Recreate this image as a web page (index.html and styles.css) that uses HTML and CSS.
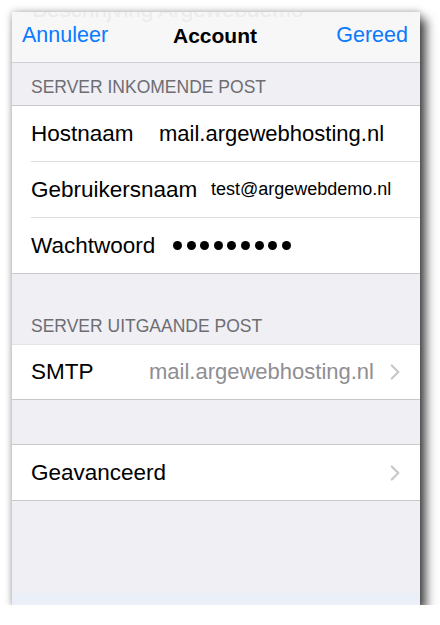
FILE: index.html
```html
<!DOCTYPE html>
<html lang="nl">
<head>
<meta charset="utf-8">
<title>Account</title>
<link rel="stylesheet" href="styles.css">
</head>
<body>
<div class="phone">
  <header class="nav">
    <span class="ghost-title">Beschrijving Argewebdemo</span>
    <span class="nav-btn nav-left">Annuleer</span>
    <span class="nav-title">Account</span>
    <span class="nav-btn nav-right">Gereed</span>
  </header>

  <div class="section-header">SERVER INKOMENDE POST</div>
  <div class="group">
    <div class="row">
      <span class="label label-host">Hostnaam</span>
      <span class="value">mail.argewebhosting.nl</span>
    </div>
    <div class="row">
      <span class="label label-user">Gebruikersnaam</span>
      <span class="value value-small">test@argewebdemo.nl</span>
    </div>
    <div class="row">
      <span class="label label-pass">Wachtwoord</span>
      <span class="dots" aria-label="wachtwoord">
        <i class="dot"></i><i class="dot"></i><i class="dot"></i><i class="dot"></i><i class="dot"></i><i class="dot"></i><i class="dot"></i><i class="dot"></i><i class="dot"></i>
      </span>
    </div>
  </div>

  <div class="section-header header-spaced">SERVER UITGAANDE POST</div>
  <div class="group group-light">
    <div class="row row-short">
      <span class="label">SMTP</span>
      <span class="value value-detail">mail.argewebhosting.nl</span>
      <svg class="chevron" width="10" height="16" viewBox="0 0 10 16"><path d="M1.8 1.5 L8.3 8 L1.8 14.5" fill="none" stroke="#c7c7cc" stroke-width="2.2" stroke-linecap="round" stroke-linejoin="round"/></svg>
    </div>
  </div>

  <div class="spacer"></div>
  <div class="group">
    <div class="row">
      <span class="label">Geavanceerd</span>
      <svg class="chevron chevron-end" width="10" height="16" viewBox="0 0 10 16"><path d="M1.8 1.5 L8.3 8 L1.8 14.5" fill="none" stroke="#c7c7cc" stroke-width="2.2" stroke-linecap="round" stroke-linejoin="round"/></svg>
    </div>
  </div>

  <div class="fill"></div>
  <div class="bottom-strip"></div>
</div>
</body>
</html>
```

FILE: styles.css
```css
html, body {
  margin: 0;
  padding: 0;
  background: #ffffff;
}

body {
  font-family: "Liberation Sans", Arial, sans-serif;
}

.phone {
  margin: 12px 0 0 12px;
  width: 408px;
  height: 593px;
  background: #efeff4;
  display: flex;
  flex-direction: column;
  overflow: hidden;
  box-shadow: 6px 7px 10px rgba(0, 0, 0, 0.7), 0 0 7px rgba(0, 0, 0, 0.3);
}

/* navigation bar */
.nav {
  position: relative;
  flex: none;
  height: 47px;
  padding: 0 12px 3px 10px;
  background: #f7f7f7;
  border-bottom: 1px solid #cfcfd3;
  display: grid;
  grid-template-columns: 1fr auto 1fr;
  align-items: center;
}

.ghost-title {
  position: absolute;
  top: -13px;
  left: 20px;
  font-size: 22.5px;
  line-height: 22px;
  color: #ebebed;
  white-space: nowrap;
}

.nav-btn {
  position: relative;
  font-size: 21.5px;
  color: #0a7aff;
}

.nav-left {
  justify-self: start;
}

.nav-right {
  justify-self: end;
}

.nav-title {
  position: relative;
  font-size: 21px;
  font-weight: bold;
  color: #000;
}

/* section headers */
.section-header {
  flex: none;
  padding: 14px 19px 8px;
  font-size: 17.5px;
  line-height: 20px;
  color: #6d6d72;
}

.header-spaced {
  padding-top: 42px;
}

/* groups and rows */
.group {
  flex: none;
  background: #ffffff;
  border-top: 1px solid #c8c7cc;
  border-bottom: 1px solid #c8c7cc;
  padding-left: 19px;
}

.group-light {
  border-top-color: #e4e4e8;
}

.row {
  height: 55px;
  display: flex;
  align-items: center;
  padding-right: 20px;
}

.row + .row {
  border-top: 1px solid #dcdce0;
}

.row-short {
  height: 54px;
}

.label {
  flex: none;
  font-size: 22.5px;
  color: #000;
  white-space: nowrap;
}

.label-host {
  width: 128px;
}

.label-user {
  width: 180px;
}

.label-pass {
  width: 142px;
}

.value {
  font-size: 22px;
  color: #000;
  white-space: nowrap;
}

.value-small {
  font-size: 18px;
}

.value-detail {
  margin-left: auto;
  color: #8e8e93;
}

.dots {
  display: flex;
  gap: 4.6px;
  align-items: center;
}

.dot {
  display: block;
  width: 9px;
  height: 9px;
  border-radius: 50%;
  background: #000;
}

.chevron {
  flex: none;
  display: block;
  margin-left: 16px;
}

.chevron-end {
  margin-left: auto;
}

.spacer {
  flex: none;
  height: 44px;
}

.fill {
  flex: 1;
}

.bottom-strip {
  flex: none;
  height: 12px;
  background: #ebf0f8;
}
```
